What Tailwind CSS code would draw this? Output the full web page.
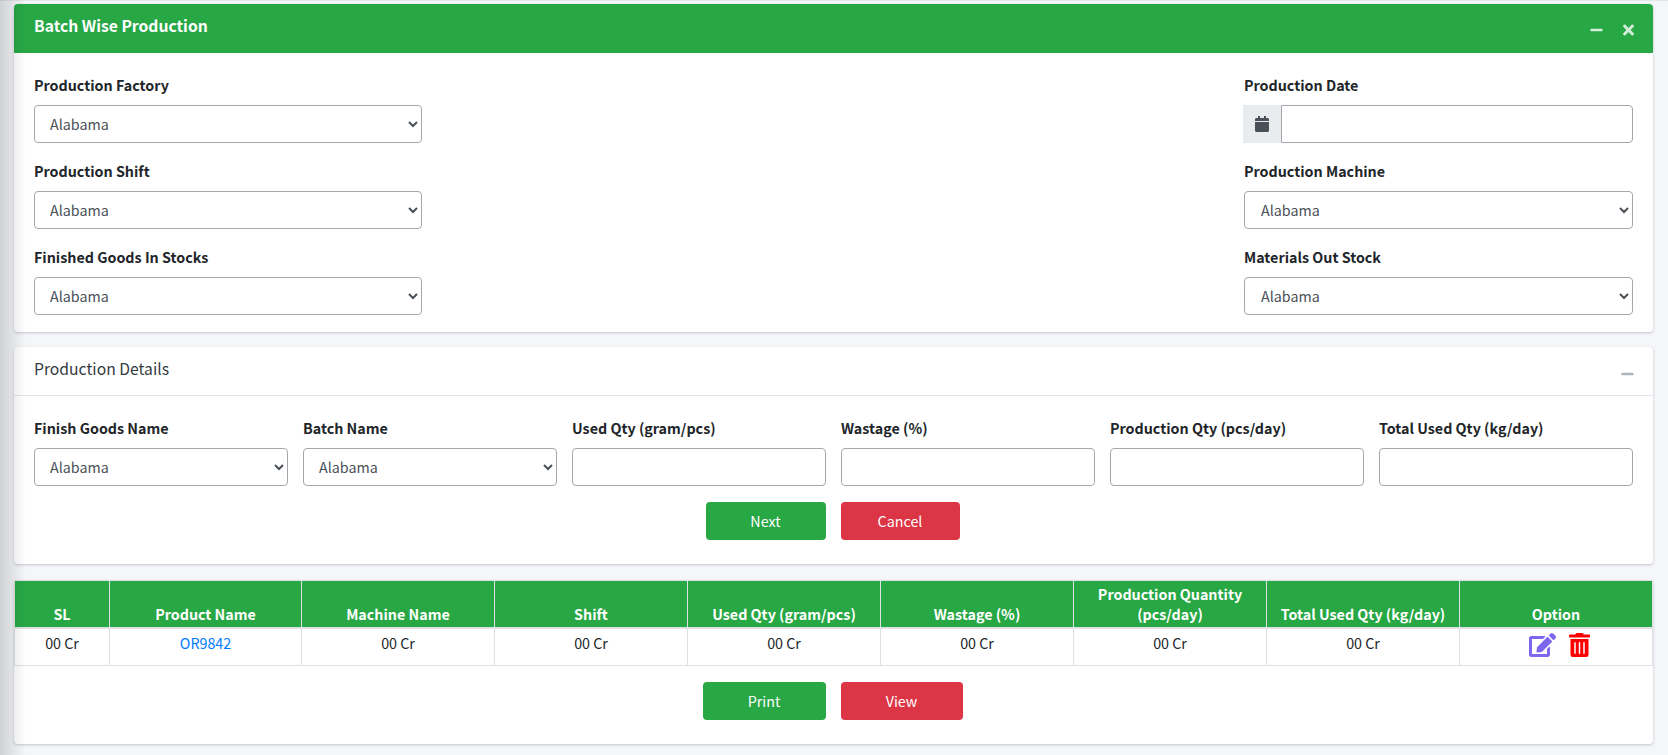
<!DOCTYPE html>
<html lang="en">
<head>
  <meta charset="UTF-8">
  <title>Batch Wise Production</title>
  <script src="https://cdn.jsdelivr.net/npm/@tailwindcss/browser@4"></script>
</head>
<body class="bg-[#f4f6f9] text-[#212529] text-[14.3px] leading-[24px] font-['Noto_Sans_CJK_SC','Noto_Sans',sans-serif] h-[755px] overflow-hidden">
  <div class="absolute left-0 top-0 w-[26px] h-[755px] bg-gradient-to-r from-black/15 to-transparent pointer-events-none"></div>
  <div class="h-[4px] border-t border-[#e4e5e8]"></div>
  <main class="ml-[14px] mr-[15px] flex flex-col">

    <!-- batch wise production -->
    <section class="bg-white rounded-[4px] shadow-[0_1px_3px_rgba(0,0,0,0.2)] h-[328px] mb-[15px]">
      <div class="bg-[#28a745] text-white h-[49px] rounded-t-[4px] pl-[20px] pr-[19px] flex items-center justify-between">
        <h3 class="font-bold text-[15.7px] leading-[26px] -mt-[5px]">Batch Wise Production</h3>
        <div class="flex items-center gap-[20px] text-white/80 mt-[3px]">
          <svg class="w-[13px] h-[14px]" viewBox="0 0 448 512" fill="currentColor"><path d="M416 208H32c-17.67 0-32 14.33-32 32v32c0 17.67 14.33 32 32 32h384c17.67 0 32-14.33 32-32v-32c0-17.67-14.33-32-32-32z"/></svg>
          <svg class="w-[11px] h-[16px]" viewBox="0 0 352 512" fill="currentColor"><path d="M242.72 256l100.07-100.07c12.28-12.28 12.28-32.19 0-44.48l-22.24-22.24c-12.28-12.28-32.19-12.28-44.48 0L176 189.28 75.93 89.21c-12.28-12.28-32.19-12.28-44.48 0L9.21 111.45c-12.28 12.28-12.28 32.19 0 44.48L109.28 256 9.21 356.07c-12.28 12.28-12.28 32.19 0 44.48l22.24 22.24c12.28 12.28 32.2 12.28 44.48 0L176 322.72l100.07 100.07c12.28 12.28 32.2 12.28 44.48 0l22.24-22.24c12.28-12.28 12.28-32.19 0-44.48L242.72 256z"/></svg>
        </div>
      </div>
      <div class="pl-[20px] pr-[20px] pt-[20px] flex justify-between">
        <div class="w-[388px] flex flex-col gap-[16px]">
          <div>
            <label class="block font-bold h-[24px] mb-[8px]">Production Factory</label>
            <select class="block w-full h-[38px] bg-white border border-[#a4a8ad] rounded-[4px] pl-[11px] pr-[12px] pb-[2px] text-[#495057]"><option>Alabama</option></select>
          </div>
          <div>
            <label class="block font-bold h-[24px] mb-[8px]">Production Shift</label>
            <select class="block w-full h-[38px] bg-white border border-[#a4a8ad] rounded-[4px] pl-[11px] pr-[12px] pb-[2px] text-[#495057]"><option>Alabama</option></select>
          </div>
          <div>
            <label class="block font-bold h-[24px] mb-[8px]">Finished Goods In Stocks</label>
            <select class="block w-full h-[38px] bg-white border border-[#a4a8ad] rounded-[4px] pl-[11px] pr-[12px] pb-[2px] text-[#495057]"><option>Alabama</option></select>
          </div>
        </div>
        <div class="w-[389px] flex flex-col gap-[16px]">
          <div>
            <label class="block font-bold h-[24px] mb-[8px]">Production Date</label>
            <div class="flex h-[38px] -ml-[1px]">
              <span class="w-[38px] bg-[#e9ecef] flex items-center justify-center text-[#495057]">
                <svg class="w-[14px] h-[16px]" viewBox="0 0 448 512" fill="currentColor"><path d="M12 192h424c6.6 0 12 5.4 12 12v260c0 26.5-21.5 48-48 48H48c-26.5 0-48-21.5-48-48V204c0-6.6 5.4-12 12-12zm436-44v-36c0-26.5-21.5-48-48-48h-48V12c0-6.6-5.4-12-12-12h-40c-6.6 0-12 5.4-12 12v52H160V12c0-6.6-5.4-12-12-12h-40c-6.6 0-12 5.4-12 12v52H48C21.5 64 0 85.5 0 112v36c0 6.6 5.4 12 12 12h424c6.6 0 12-5.4 12-12z"/></svg>
              </span>
              <input type="text" class="flex-1 min-w-0 bg-white border border-[#a4a8ad] rounded-r-[4px] px-[12px]">
            </div>
          </div>
          <div>
            <label class="block font-bold h-[24px] mb-[8px]">Production Machine</label>
            <select class="block w-full h-[38px] bg-white border border-[#a4a8ad] rounded-[4px] pl-[12px] pr-[12px] pb-[2px] text-[#495057]"><option>Alabama</option></select>
          </div>
          <div>
            <label class="block font-bold h-[24px] mb-[8px]">Materials Out Stock</label>
            <select class="block w-full h-[38px] bg-white border border-[#a4a8ad] rounded-[4px] pl-[12px] pr-[12px] pb-[2px] text-[#495057]"><option>Alabama</option></select>
          </div>
        </div>
      </div>
    </section>

    <!-- production details -->
    <section class="bg-white rounded-[4px] shadow-[0_1px_3px_rgba(0,0,0,0.2)] h-[217px] mb-[16px]">
      <div class="h-[49px] border-b border-[#e2e4e7] pl-[20px] pr-[19px] flex items-center justify-between">
        <h3 class="text-[15.7px] text-[#343a40] -mt-[4px]">Production Details</h3>
        <svg class="w-[13px] h-[14px] text-[#adb5bd] mt-[5px]" viewBox="0 0 448 512" fill="currentColor"><path d="M416 208H32c-17.67 0-32 14.33-32 32v32c0 17.67 14.33 32 32 32h384c17.67 0 32-14.33 32-32v-32c0-17.67-14.33-32-32-32z"/></svg>
      </div>
      <div class="pl-[20px] pr-[20px] pt-[20px]">
        <div class="grid grid-cols-6 gap-x-[15px]">
          <div>
            <label class="block font-bold h-[24px] mb-[8px]">Finish Goods Name</label>
            <select class="block w-full h-[38px] bg-white border border-[#a4a8ad] rounded-[4px] pl-[11px] pr-[12px] pb-[2px] text-[#495057]"><option>Alabama</option></select>
          </div>
          <div>
            <label class="block font-bold h-[24px] mb-[8px]">Batch Name</label>
            <select class="block w-full h-[38px] bg-white border border-[#a4a8ad] rounded-[4px] pl-[11px] pr-[12px] pb-[2px] text-[#495057]"><option>Alabama</option></select>
          </div>
          <div>
            <label class="block font-bold h-[24px] mb-[8px]">Used Qty (gram/pcs)</label>
            <input type="text" class="block w-full h-[38px] bg-white border border-[#a4a8ad] rounded-[4px] px-[12px]">
          </div>
          <div>
            <label class="block font-bold h-[24px] mb-[8px]">Wastage (%)</label>
            <input type="text" class="block w-full h-[38px] bg-white border border-[#a4a8ad] rounded-[4px] px-[12px]">
          </div>
          <div>
            <label class="block font-bold h-[24px] mb-[8px]">Production Qty (pcs/day)</label>
            <input type="text" class="block w-full h-[38px] bg-white border border-[#a4a8ad] rounded-[4px] px-[12px]">
          </div>
          <div>
            <label class="block font-bold h-[24px] mb-[8px]">Total Used Qty (kg/day)</label>
            <input type="text" class="block w-full h-[38px] bg-white border border-[#a4a8ad] rounded-[4px] px-[12px]">
          </div>
        </div>
        <div class="flex justify-center gap-[15px] mt-[16px] ml-[-2px]">
          <button class="w-[120px] h-[38px] bg-[#28a745] text-white rounded-[4px]">Next</button>
          <button class="w-[119px] h-[38px] bg-[#dc3545] text-white rounded-[4px]">Cancel</button>
        </div>
      </div>
    </section>

    <!-- list -->
    <section class="bg-white rounded-[4px] shadow-[0_1px_3px_rgba(0,0,0,0.2)] h-[164px]">
      <table class="w-full table-fixed border-collapse text-center leading-[20px]">
        <thead>
          <tr class="bg-[#28a745] text-white h-[47px] border-t border-[#dee2e6]">
            <th class="w-[95px] font-bold align-bottom pb-[3px] border-b-2 border-x border-[#dee2e6]">SL</th>
            <th class="w-[192px] font-bold align-bottom pb-[3px] border-b-2 border-x border-[#dee2e6]">Product Name</th>
            <th class="w-[193px] font-bold align-bottom pb-[3px] border-b-2 border-x border-[#dee2e6]">Machine Name</th>
            <th class="w-[193px] font-bold align-bottom pb-[3px] border-b-2 border-x border-[#dee2e6]">Shift</th>
            <th class="w-[193px] font-bold align-bottom pb-[3px] border-b-2 border-x border-[#dee2e6]">Used Qty (gram/pcs)</th>
            <th class="w-[193px] font-bold align-bottom pb-[3px] border-b-2 border-x border-[#dee2e6]">Wastage (%)</th>
            <th class="w-[193px] font-bold align-bottom pb-[3px] border-b-2 border-x border-[#dee2e6]">Production Quantity (pcs/day)</th>
            <th class="w-[193px] font-bold align-bottom pb-[3px] border-b-2 border-x border-[#dee2e6]">Total Used Qty (kg/day)</th>
            <th class="font-bold align-bottom pb-[3px] border-b-2 border-x border-[#dee2e6]">Option</th>
          </tr>
        </thead>
        <tbody>
          <tr class="h-[38px] border-b border-[#dee2e6]">
            <td class="align-top pt-[4px] border-x border-[#dee2e6]">00 Cr</td>
            <td class="align-top pt-[4px] border-x border-[#dee2e6] text-[#007bff]">OR9842</td>
            <td class="align-top pt-[4px] border-x border-[#dee2e6]">00 Cr</td>
            <td class="align-top pt-[4px] border-x border-[#dee2e6]">00 Cr</td>
            <td class="align-top pt-[4px] border-x border-[#dee2e6]">00 Cr</td>
            <td class="align-top pt-[4px] border-x border-[#dee2e6]">00 Cr</td>
            <td class="align-top pt-[4px] border-x border-[#dee2e6]">00 Cr</td>
            <td class="align-top pt-[4px] border-x border-[#dee2e6]">00 Cr</td>
            <td class="align-top pt-[4px] pl-[6px] border-x border-[#dee2e6]">
              <div class="flex justify-center gap-[13px]">
                <svg class="w-[27px] h-[24px] text-[#7b68ee]" viewBox="0 0 576 512" fill="currentColor"><path d="M402.6 83.2l90.2 90.2c3.8 3.8 3.8 10 0 13.8L274.4 405.6l-92.8 10.3c-12.4 1.4-22.9-9.1-21.5-21.5l10.3-92.8L388.8 83.2c3.8-3.8 10-3.8 13.8 0zm162-22.9l-48.8-48.8c-15.2-15.2-39.9-15.2-55.2 0l-35.4 35.4c-3.8 3.8-3.8 10 0 13.8l90.2 90.2c3.8 3.8 10 3.8 13.8 0l35.4-35.4c15.2-15.3 15.2-40 0-55.2zM384 346.2V448H64V128h229.8c3.2 0 6.2-1.3 8.5-3.5l40-40c7.6-7.6 2.2-20.5-8.5-20.5H48C21.5 64 0 85.5 0 112v352c0 26.5 21.5 48 48 48h352c26.5 0 48-21.5 48-48V306.2c0-10.7-12.9-16-20.5-8.5l-40 40c-2.2 2.3-3.5 5.3-3.5 8.5z"/></svg>
                <svg class="w-[21px] h-[24px] text-[#ff0000]" viewBox="0 0 448 512" fill="currentColor"><path d="M32 464a48 48 0 0 0 48 48h288a48 48 0 0 0 48-48V128H32zm272-256a16 16 0 0 1 32 0v224a16 16 0 0 1-32 0zm-96 0a16 16 0 0 1 32 0v224a16 16 0 0 1-32 0zm-96 0a16 16 0 0 1 32 0v224a16 16 0 0 1-32 0zM432 32H312l-9.4-18.7A24 24 0 0 0 281.1 0H166.8a23.72 23.72 0 0 0-21.4 13.3L136 32H16A16 16 0 0 0 0 48v32a16 16 0 0 0 16 16h416a16 16 0 0 0 16-16V48a16 16 0 0 0-16-16z"/></svg>
              </div>
            </td>
          </tr>
        </tbody>
      </table>
      <div class="flex justify-center gap-[15px] mt-[16px] ml-[-2px]">
        <button class="w-[123px] h-[38px] bg-[#28a745] text-white rounded-[4px]">Print</button>
        <button class="w-[122px] h-[38px] bg-[#dc3545] text-white rounded-[4px]">View</button>
      </div>
    </section>
  </main>
</body>
</html>
